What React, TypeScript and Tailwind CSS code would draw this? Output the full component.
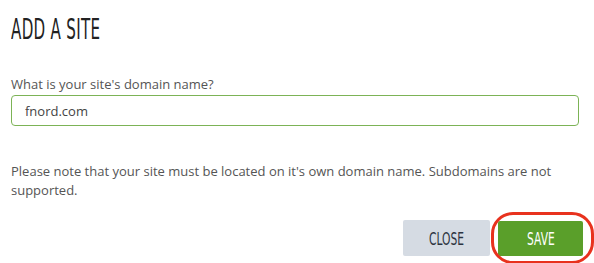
const App = () => {
    return (
        <div className="w-[594px] h-[263px] bg-white overflow-hidden px-[11px] pt-[12px]" style={{ fontFamily: '"Open Sans", sans-serif' }}>
            <h1
                className="text-[28px] leading-[36px] text-[#222] origin-left scale-x-[0.6] whitespace-nowrap font-light tracking-[0.5px]"
                style={{ fontFamily: '"DejaVu Sans Condensed", "DejaVu Sans", sans-serif' }}
            >
                ADD A SITE
            </h1>

            <label className="block mt-[27px] text-[13px] leading-[18px] text-[#555]">
                What is your site's domain name?
            </label>
            <input
                defaultValue="fnord.com"
                className="block mt-[2px] w-[568px] h-[31px] px-[13px] text-[13px] text-[#444] border border-[#7cb356] rounded-[4px] outline-none"
            />

            <p className="mt-[36px] w-[560px] text-[13px] leading-[19px] text-[#555]">
                Please note that your site must be located on it's own domain name. Subdomains are not supported.
            </p>

            <div className="flex justify-end items-center gap-[8px] mt-[20px]">
                <button
                    className="w-[87px] h-[36px] bg-[#d5dbe3] text-[#2c3340] text-[18px] rounded-[2px] uppercase"
                    style={{ fontFamily: '"DejaVu Sans Condensed", sans-serif' }}
                >
                    <span className="inline-block scale-x-[0.66]">Close</span>
                </button>
                <div className="relative">
                    <button
                        className="w-[85px] h-[35px] bg-[#5a9f2a] text-white text-[18px] rounded-[2px] uppercase"
                        style={{ fontFamily: '"DejaVu Sans Condensed", sans-serif' }}
                    >
                        <span className="inline-block scale-x-[0.66]">Save</span>
                    </button>
                    <div className="absolute -left-[7px] -top-[9px] w-[103px] h-[52px] border-[3.5px] border-[#e8321e] rounded-[22px] pointer-events-none" />
                </div>
            </div>
        </div>
    )
};

export default App
